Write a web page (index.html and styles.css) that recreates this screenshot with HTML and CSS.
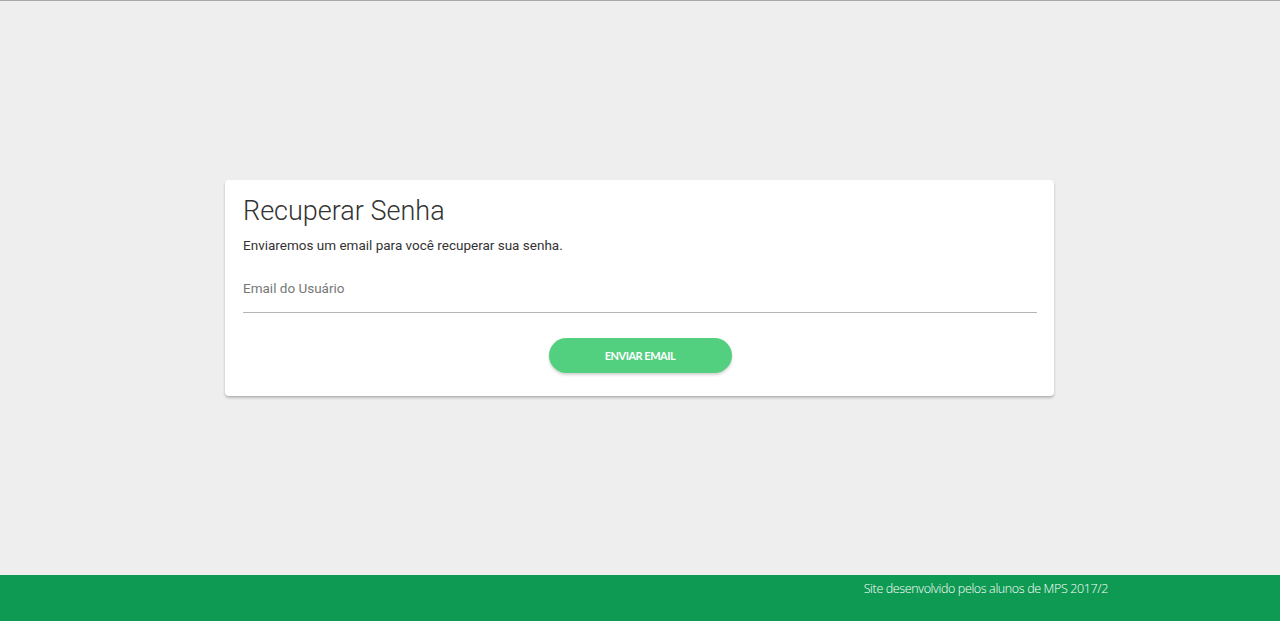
FILE: index.html
```html
<!DOCTYPE html>
<html lang="pt-BR">
<head>
<meta charset="utf-8">
<title>Recuperar Senha</title>
<link rel="stylesheet" href="styles.css">
</head>
<body>
<main class="main">
  <section class="card">
    <h1 class="title">Recuperar Senha</h1>
    <p class="subtitle">Enviaremos um email para você recuperar sua senha.</p>
    <div class="field">
      <input class="input" type="email" placeholder="Email do Usuário">
    </div>
    <div class="actions">
      <button class="btn" type="button">ENVIAR EMAIL</button>
    </div>
  </section>
</main>
<footer class="footer">
  <span class="footer-text">Site desenvolvido pelos alunos de MPS 2017/2</span>
</footer>
</body>
</html>
```
FILE: styles.css
```css
* { box-sizing: border-box; }
html, body { margin: 0; padding: 0; }
body {
  min-height: 621px;
  display: flex;
  flex-direction: column;
  background: #eeeeee;
  border-top: 1px solid #a9a9a9;
  font-family: Roboto, "Liberation Sans", sans-serif;
}
.main {
  flex: 1;
  display: flex;
  align-items: center;
  justify-content: center;
}
.card {
  width: 829px;
  margin-right: 1px;
  background: #fff;
  border-radius: 4px;
  box-shadow: 0 2px 3px rgba(0,0,0,0.2), 0 1px 1px rgba(0,0,0,0.08);
  padding: 14px 17px 23px 18px;
}
.title {
  margin: 0;
  font-weight: 300;
  font-size: 27px;
  line-height: 34px;
  color: #333;
}
.subtitle {
  margin: 8px 0 0;
  font-size: 13.5px;
  line-height: 18px;
  color: #333;
}
.field {
  margin-top: 25px;
  border-bottom: 1px solid #b5b5b5;
}
.input {
  display: block;
  width: 100%;
  border: 0;
  outline: none;
  padding: 0 0 15px;
  font-family: Roboto, "Liberation Sans", sans-serif;
  font-size: 13.5px;
  line-height: 18px;
  color: #333;
  background: transparent;
}
.input::placeholder { color: #777; }
.actions {
  display: flex;
  justify-content: center;
  margin-top: 25px;
}
.btn {
  width: 183px;
  height: 35px;
  border: 0;
  border-radius: 18px;
  background: #52d07f;
  color: #fff;
  font-family: Lato, "Open Sans", sans-serif;
  font-size: 11px;
  font-weight: 700;
  letter-spacing: -0.5px;
  box-shadow: 0 2px 3px rgba(0,0,0,0.18);
  cursor: pointer;
}
.footer {
  height: 46px;
  background: #0f9a53;
  display: flex;
  justify-content: flex-end;
  padding: 5px 172px 0 0;
}
.footer-text {
  font-family: "Open Sans", sans-serif;
  font-size: 12.5px;
  font-weight: 300;
  color: #fff;
  letter-spacing: -0.37px;
  line-height: 18px;
}
```
